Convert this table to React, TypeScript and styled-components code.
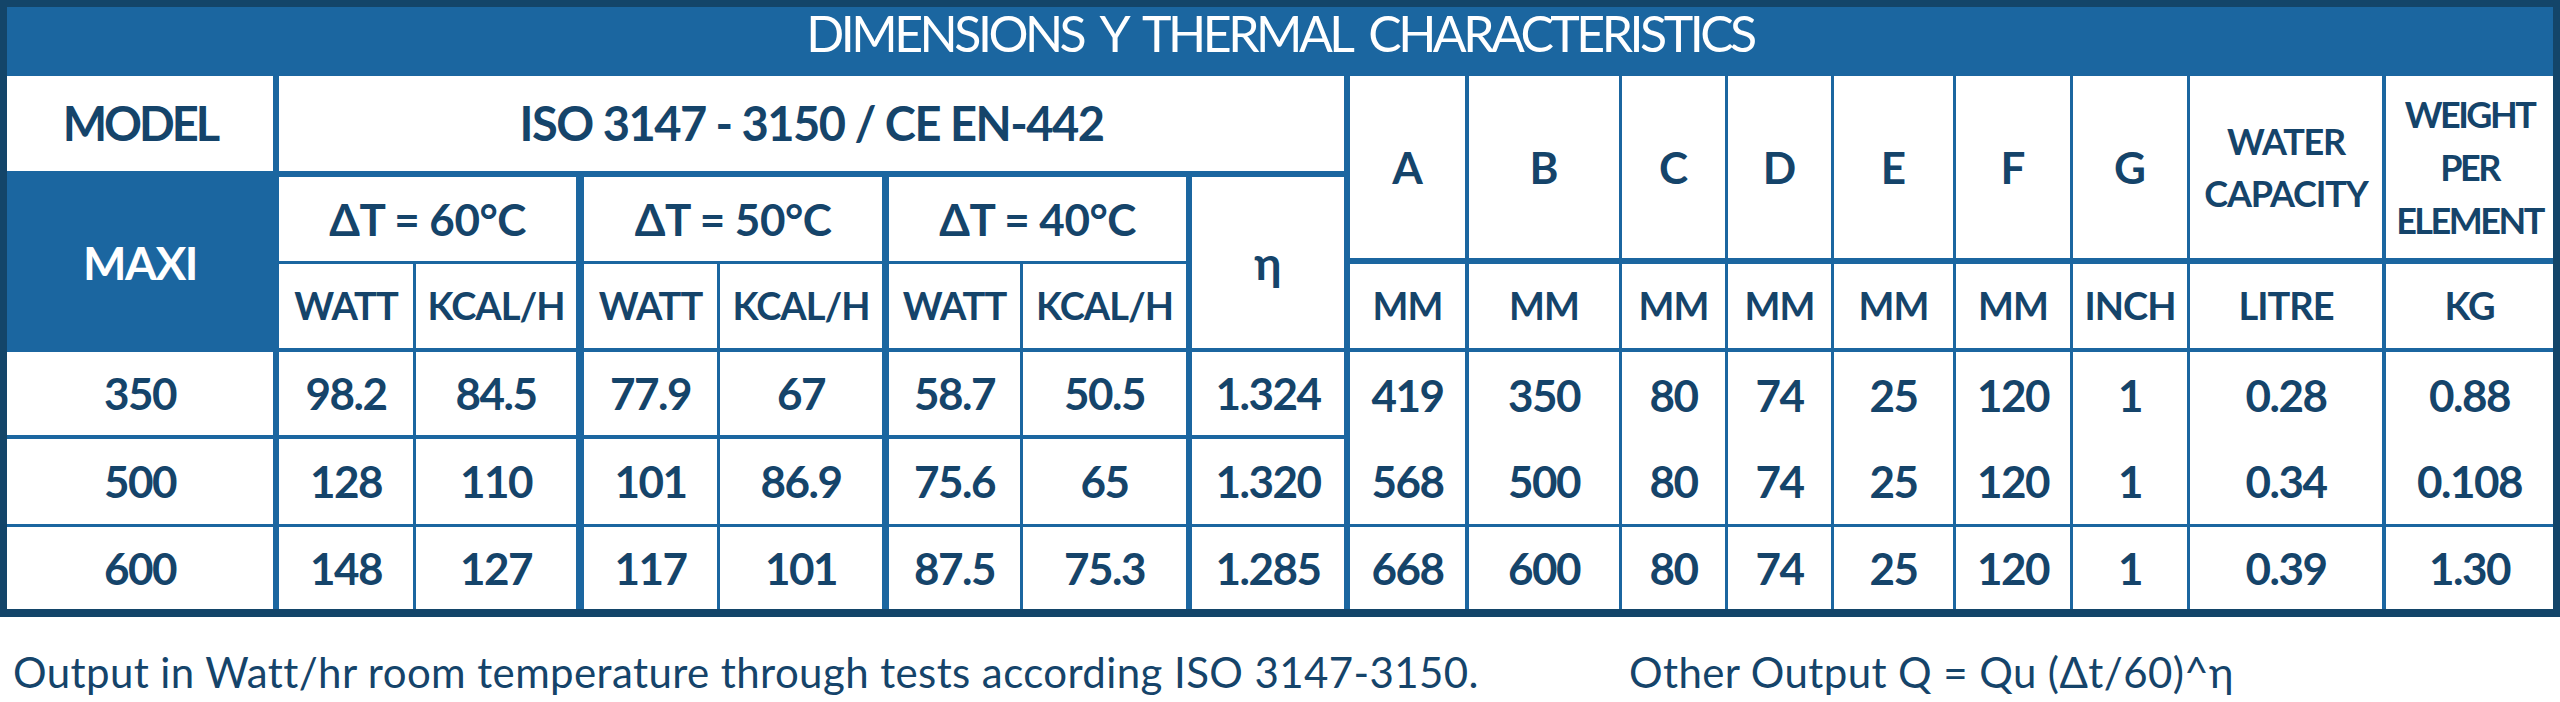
import styled, { createGlobalStyle } from 'styled-components';

const NAVY = '#134569';
const BLUE = '#1b66a0';
const INK = '#15446a';

const GlobalStyle = createGlobalStyle`
	html, body {
		margin: 0;
		padding: 0;
		background: #fff;
	}
	body {
		width: 2560px;
		height: 702px;
		overflow: hidden;
	}
	* {
		box-sizing: border-box;
	}
`;

// right-hand gap of each column track, in px (the blue rule between cells)
const COL_GAP = [6, 3, 8, 3, 7, 3, 6, 6, 4, 3, 3, 3, 3, 3, 3, 4, 0];

const Sheet = styled.div`
	width: 2560px;
`;

const Frame = styled.div`
	border: 7px solid ${NAVY};
	border-bottom-width: 8px;
	background: ${BLUE};
`;

const Title = styled.h1`
	margin: 0;
	height: 69px;
	padding-bottom: 17px;
	display: flex;
	align-items: center;
	justify-content: center;
	font: 400 50px 'Lato', 'Liberation Sans', sans-serif;
	letter-spacing: -3.5px;
	word-spacing: 9px;
	color: #fff;
`;

const Grid = styled.div`
	display: grid;
	grid-template-columns: 272px 137px 168px 136px 169px 134px 169px 158px 119px 153px 106px 106px 122px 117px 117px 196px 167px;
	grid-template-rows: 101px 87px 88px 87px 88px 82px;
`;

type CellProps = {
	$col: string;
	$row: string;
	$r?: number;
	$b?: number;
};

const Cell = styled.div<CellProps>`
	grid-column: ${p => p.$col};
	grid-row: ${p => p.$row};
	border-right: ${p => p.$r ?? 0}px solid ${BLUE};
	border-bottom: ${p => p.$b ?? 0}px solid ${BLUE};
	background: #fff;
	color: ${INK};
	display: flex;
	align-items: center;
	justify-content: center;
	text-align: center;
	font-family: 'Lato', 'Liberation Sans', sans-serif;
	font-weight: 700;
	line-height: 1.2;
	white-space: nowrap;
`;

const HeadCell = styled(Cell)<{ $ls: number }>`
	font-size: 47px;
	letter-spacing: ${p => p.$ls}px;
`;

const MaxiCell = styled(Cell)`
	background: ${BLUE};
	color: #fff;
	font-size: 46px;
	letter-spacing: -1.5px;
`;

const DeltaCell = styled(Cell)`
	font-size: 44px;
	letter-spacing: -0.5px;
`;

const LetterCell = styled(Cell)`
	font-size: 44px;
`;

const StackCell = styled(Cell)<{ $lh: number; $ls: number }>`
	font-size: 36px;
	line-height: ${p => p.$lh}px;
	letter-spacing: ${p => p.$ls}px;
`;

const UnitCell = styled(Cell)`
	font-size: 38px;
	letter-spacing: -1px;
`;

const EtaCell = styled(Cell)`
	font-size: 46px;
`;

const DataCell = styled(Cell)`
	font-size: 44px;
	letter-spacing: -1.5px;
`;

const Footer = styled.div`
	display: grid;
	grid-template-columns: 1616px auto;
	padding-left: 13px;
	margin-top: 31px;
	font: 400 42px/48px 'Lato', 'Open Sans', sans-serif;
	letter-spacing: 0.4px;
	color: ${INK};
	white-space: nowrap;
`;

const rows = [
	['350', '98.2', '84.5', '77.9', '67', '58.7', '50.5', '1.324', '419', '350', '80', '74', '25', '120', '1', '0.28', '0.88'],
	['500', '128', '110', '101', '86.9', '75.6', '65', '1.320', '568', '500', '80', '74', '25', '120', '1', '0.34', '0.108'],
	['600', '148', '127', '117', '101', '87.5', '75.3', '1.285', '668', '600', '80', '74', '25', '120', '1', '0.39', '1.30'],
];

const rowBottom = [4, 3, 0];

const deltas = [
	{ label: 'ΔT = 60°C', col: '2 / 4', r: COL_GAP[2] },
	{ label: 'ΔT = 50°C', col: '4 / 6', r: COL_GAP[4] },
	{ label: 'ΔT = 40°C', col: '6 / 8', r: COL_GAP[6] },
];

const letters = ['A', 'B', 'C', 'D', 'E', 'F', 'G'];
const units = ['WATT', 'KCAL/H', 'WATT', 'KCAL/H', 'WATT', 'KCAL/H'];
const dimUnits = ['MM', 'MM', 'MM', 'MM', 'MM', 'MM', 'INCH', 'LITRE', 'KG'];

const App = (): JSX.Element => (
	<Sheet>
		<GlobalStyle />
		<Frame>
			<Title>DIMENSIONS Y THERMAL CHARACTERISTICS</Title>
			<Grid>
				<HeadCell $col="1" $row="1" $r={6} $b={6} $ls={-3}>
					MODEL
				</HeadCell>
				<HeadCell $col="2 / 9" $row="1" $r={6} $b={6} $ls={-1.5}>
					ISO 3147 - 3150 / CE EN-442
				</HeadCell>
				{letters.map((l, i) => (
					<LetterCell key={l} $col={`${9 + i}`} $row="1 / 3" $r={COL_GAP[8 + i]} $b={6}>
						{l}
					</LetterCell>
				))}
				<StackCell $col="16" $row="1 / 3" $r={COL_GAP[15]} $b={6} $lh={52} $ls={-1.2}>
					WATER
					<br />
					CAPACITY
				</StackCell>
				<StackCell $col="17" $row="1 / 3" $b={6} $lh={53} $ls={-2.5}>
					WEIGHT
					<br />
					PER
					<br />
					ELEMENT
				</StackCell>

				<MaxiCell $col="1" $row="2 / 4" $r={6} $b={4}>
					MAXI
				</MaxiCell>
				{deltas.map(d => (
					<DeltaCell key={d.label} $col={d.col} $row="2" $r={d.r} $b={3}>
						{d.label}
					</DeltaCell>
				))}
				<EtaCell $col="8" $row="2 / 4" $r={6} $b={4}>
					η
				</EtaCell>

				{units.map((u, i) => (
					<UnitCell key={`u${i}`} $col={`${2 + i}`} $row="3" $r={COL_GAP[1 + i]} $b={4}>
						{u}
					</UnitCell>
				))}
				{dimUnits.map((u, i) => (
					<UnitCell key={`d${i}`} $col={`${9 + i}`} $row="3" $r={COL_GAP[8 + i]} $b={4}>
						{u}
					</UnitCell>
				))}

				{rows.map((row, ri) =>
					row.map((v, ci) => (
						<DataCell
							key={`${ri}-${ci}`}
							$col={`${ci + 1}`}
							$row={`${4 + ri}`}
							$r={COL_GAP[ci]}
							// the dimension block has no rule between its first two rows
							$b={ri === 0 && ci >= 8 ? 0 : rowBottom[ri]}
						>
							{v}
						</DataCell>
					))
				)}
			</Grid>
		</Frame>
		<Footer>
			<span>Output in Watt/hr room temperature through tests according ISO 3147-3150.</span>
			<span>Other Output Q = Qu (Δt/60)^η</span>
		</Footer>
	</Sheet>
);

export default App;
